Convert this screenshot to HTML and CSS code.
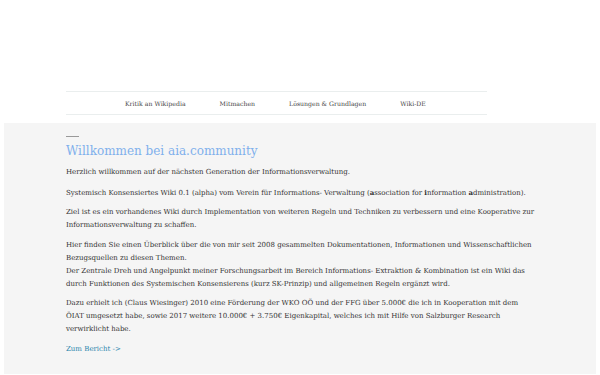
FILE: index.html
```html
<!DOCTYPE html>
<html lang="de">
<head>
    <meta charset="UTF-8">
    <meta name="viewport" content="width=device-width, initial-scale=1.0">
    <title>aia.community</title>
    <link rel="stylesheet" href="styles.css">
</head>
<body>
    <header class="site-header">
        <nav class="main-nav">
            <a href="#">Kritik an Wikipedia</a>
            <a href="#">Mitmachen</a>
            <a href="#">Lösungen &amp; Grundlagen</a>
            <a href="#">Wiki-DE</a>
        </nav>
    </header>
    <main class="content">
        <div class="inner">
            <div class="dash"></div>
            <h1>Willkommen bei aia.community</h1>
            <p>Herzlich willkommen auf der nächsten Generation der Informationsverwaltung.</p>
            <p>Systemisch Konsensiertes Wiki 0.1 (alpha) vom Verein für Informations- Verwaltung (<b>a</b>ssociation for <b>i</b>nformation <b>a</b>dministration).</p>
            <p>Ziel ist es ein vorhandenes Wiki durch Implementation von weiteren Regeln und Techniken zu verbessern und eine Kooperative zur Informationsverwaltung zu schaffen.</p>
            <p>Hier finden Sie einen Überblick über die von mir seit 2008 gesammelten Dokumentationen, Informationen und Wissenschaftlichen Bezugsquellen zu diesen Themen.<br>
            Der Zentrale Dreh und Angelpunkt meiner Forschungsarbeit im Bereich Informations- Extraktion &amp; Kombination ist ein Wiki das durch Funktionen des Systemischen Konsensierens (kurz SK-Prinzip) und allgemeinen Regeln ergänzt wird.</p>
            <p>Dazu erhielt ich (Claus Wiesinger) 2010 eine Förderung der WKO OÖ und der FFG über 5.000€ die ich in Kooperation mit dem ÖIAT umgesetzt habe, sowie 2017 weitere 10.000€ + 3.750€ Eigenkapital, welches ich mit Hilfe von Salzburger Research verwirklicht habe.</p>
            <p><a class="more" href="#">Zum Bericht -&gt;</a></p>
        </div>
    </main>
</body>
</html>
```

FILE: styles.css
```css
body {
    margin: 0;
    font-family: 'DejaVu Serif', serif;
    color: #333;
    background-color: white;
}
.site-header {
    padding: 91px 0 8px 66px;
}
.main-nav {
    width: 421px;
    height: 24px;
    border-top: 1px solid #eaeeee;
    border-bottom: 1px solid #eaeeee;
    display: flex;
    align-items: center;
    padding-left: 59px;
    box-sizing: border-box;
}
.main-nav a {
    font-size: 6.2px;
    color: #444;
    text-decoration: none;
    margin-right: 34px;
}
.content {
    margin: 0 4px;
    background-color: #f5f5f5;
    padding: 13px 0 12px 62px;
}
.inner {
    max-width: 470px;
}
.dash {
    width: 13px;
    height: 1px;
    background-color: #999;
}
h1 {
    font-size: 12px;
    line-height: 14px;
    font-weight: normal;
    color: #7fb0ec;
    margin: 7px 0 8px;
}
p {
    font-size: 7px;
    line-height: 13px;
    margin: 0 0 6.5px;
}
b {
    font-weight: bold;
}
.more {
    color: #2a86ad;
    text-decoration: none;
}
```
